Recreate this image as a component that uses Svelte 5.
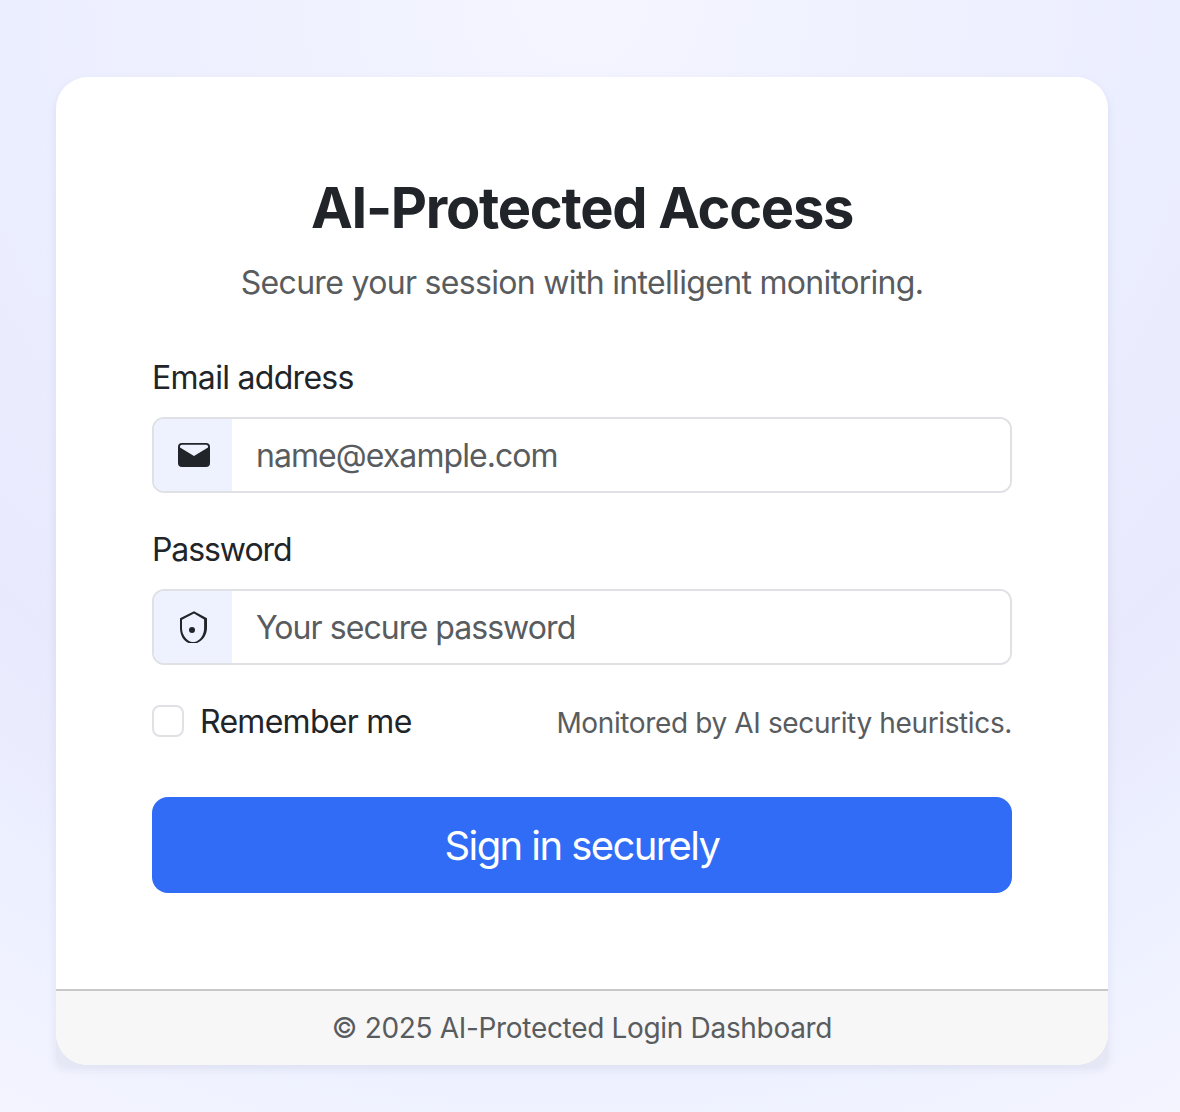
<script>
  let email = $state('');
  let password = $state('');
  let remember = $state(false);
</script>

<main>
  <div class="frame">
    <section class="card">
      <div class="body">
        <header>
          <h1>AI-Protected Access</h1>
          <p class="subtitle">Secure your session with intelligent monitoring.</p>
        </header>
        <form onsubmit={(e) => e.preventDefault()}>
          <label class="caption" for="email">Email address</label>
          <div class="group">
            <span class="addon">
              <svg width="32" height="32" viewBox="0 0 32 32" aria-hidden="true">
                <path
                  fill="#212529"
                  fill-rule="evenodd"
                  d="M4 4h24a4 4 0 0 1 4 4v16a4 4 0 0 1-4 4H4a4 4 0 0 1-4-4V8a4 4 0 0 1 4-4ZM4 5.7Q2 5.7 2 7.6V8.6L16 17 30 8.6V7.6Q30 5.7 28 5.7Z"
                />
              </svg>
            </span>
            <input id="email" type="email" placeholder="name@example.com" bind:value={email} />
          </div>
          <label class="caption tight" for="password">Password</label>
          <div class="group">
            <span class="addon">
              <svg width="32" height="32" viewBox="0 0 32 32" aria-hidden="true">
                <path
                  fill="#212529"
                  fill-rule="evenodd"
                  d="M16 .2 29 7.2V17c0 7-4.5 13-10 15h-8.500C5.500 30 2 24 2 17V7.200ZM16 2.400 4 8.700V17c0 6.800 4.300 12.800 10 14.100h2.500C22 29.800 26.100 24 26.100 17V8.500Z"
                />
                <circle cx="14" cy="19" r="3" fill="#212529" />
              </svg>
            </span>
            <input id="password" type="password" placeholder="Your secure password" bind:value={password} />
          </div>
          <div class="options">
            <label class="remember">
              <input type="checkbox" bind:checked={remember} />
              <span>Remember me</span>
            </label>
            <span class="note">Monitored by AI security heuristics.</span>
          </div>
          <button type="submit"><span>Sign in securely</span></button>
        </form>
      </div>
      <footer><span>© 2025 AI-Protected Login Dashboard</span></footer>
    </section>
  </div>
</main>

<style>
  :global(body) { margin: 0; }
  * { box-sizing: border-box; }
  main {
    height: 1112px;
    padding: 77px 72px 47px 56px;
    overflow: hidden;
    font-family: Inter, sans-serif;
    font-size: 32px;
    line-height: 48px;
    color: #212529;
    background: radial-gradient(circle at 582px 0, #f4f5ff 0, #ebeeff 590px, #e8e9fd 830px, #edf1ff 1060px, #f4f4ff 1260px);
  }
  .frame {
    height: 988px;
    border-radius: 32px 32px 8px 8px;
    background: linear-gradient(transparent 90%, rgba(33, 37, 60, 0.055) 96%);
    box-shadow: 0 4px 8px rgba(33, 37, 80, 0.04), 0 4px 16px -2px rgba(33, 37, 80, 0.05);
  }
  .card {
    height: 100%;
    border-radius: 32px;
    overflow: hidden;
    background: #fff;
    display: flex;
    flex-direction: column;
  }
  .body { flex: 1; padding: 96px 96px 0; }
  header { text-align: center; }
  h1 { margin: 0; padding-top: 2px; font-size: 56px; line-height: 67px; font-weight: 700; letter-spacing: -1.28px; }
  .subtitle { margin: 17px 0 47px; line-height: 47px; color: #595c5f; letter-spacing: -0.68px; white-space: nowrap; }
  .caption { display: block; padding-top: 1px; line-height: 47px; margin-bottom: 16px; letter-spacing: -0.7px; }
  .tight { letter-spacing: -1.08px; }
  .group {
    display: flex;
    height: 76px;
    margin-bottom: 32px;
    border: 2px solid #dfe1e5;
    border-radius: 12px;
    overflow: hidden;
  }
  .addon { width: 78px; padding-left: 2px; display: grid; place-items: center; background: #eef2ff; }
  .group input {
    flex: 1;
    min-width: 0;
    border: 0;
    outline: 0;
    padding: 2px 24px 0;
    background: #fff;
    font: inherit;
    letter-spacing: -0.93px;
    color: inherit;
  }
  .group input::placeholder { color: #595c5f; opacity: 1; }
  .options { display: flex; justify-content: space-between; align-items: center; height: 48px; margin-bottom: 52px; }
  .remember { display: flex; align-items: center; gap: 16px; letter-spacing: -0.72px; }
  .remember span { padding-top: 2px; }
  .remember input { appearance: none; width: 32px; height: 32px; margin: 0; border: 2px solid #dfe1e5; border-radius: 8px; background: #fff; }
  .note { padding-top: 4px; font-size: 28px; color: #595c5f; letter-spacing: -0.37px; }
  button {
    display: block;
    width: 100%;
    height: 96px;
    padding: 2px 0 0;
    border: 0;
    border-radius: 16px;
    background: #306cf6;
    color: #fff;
    font: inherit;
    font-size: 40px;
    letter-spacing: -1.58px;
  }
  footer {
    height: 76px;
    border-top: 2px solid #c8c8c8;
    background: #f7f7f7;
    display: grid;
    place-items: center;
    font-size: 28px;
    letter-spacing: -0.32px;
    color: #595c5f;
  }
</style>
